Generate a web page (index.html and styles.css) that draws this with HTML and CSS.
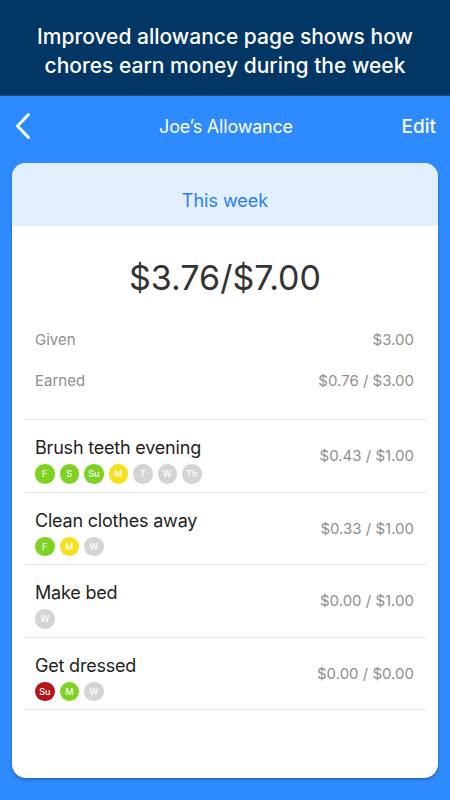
FILE: index.html
```html
<!DOCTYPE html>
<html lang="en">
<head>
    <meta charset="UTF-8">
    <meta name="viewport" content="width=device-width, initial-scale=1.0">
    <title>Joe's Allowance</title>
    <link rel="stylesheet" href="styles.css">
</head>
<body>
    <div class="promo">
        <p>Improved allowance page shows how<br>chores earn money during the week</p>
    </div>

    <div class="nav">
        <svg class="back" width="16" height="28" viewBox="0 0 16 28">
            <path d="M13.5 2.5 L2.5 14 L13.5 25.5" fill="none" stroke="#ffffff" stroke-width="3" stroke-linecap="round" stroke-linejoin="round"/>
        </svg>
        <div class="nav-title">Joe’s Allowance</div>
        <div class="nav-edit">Edit</div>
    </div>

    <div class="card">
        <div class="card-head">This week</div>

        <div class="total">$3.76/$7.00</div>

        <div class="summary">
            <div class="summary-row">
                <span>Given</span>
                <span>$3.00</span>
            </div>
            <div class="summary-row">
                <span>Earned</span>
                <span>$0.76 / $3.00</span>
            </div>
        </div>

        <div class="chores">
            <div class="chore">
                <div class="chore-info">
                    <div class="chore-name">Brush teeth evening</div>
                    <div class="days">
                        <span class="day done">F</span>
                        <span class="day done">S</span>
                        <span class="day done">Su</span>
                        <span class="day part">M</span>
                        <span class="day">T</span>
                        <span class="day">W</span>
                        <span class="day">Th</span>
                    </div>
                </div>
                <div class="chore-value">$0.43 / $1.00</div>
            </div>
            <div class="chore">
                <div class="chore-info">
                    <div class="chore-name">Clean clothes away</div>
                    <div class="days">
                        <span class="day done">F</span>
                        <span class="day part">M</span>
                        <span class="day">W</span>
                    </div>
                </div>
                <div class="chore-value">$0.33 / $1.00</div>
            </div>
            <div class="chore">
                <div class="chore-info">
                    <div class="chore-name">Make bed</div>
                    <div class="days">
                        <span class="day">W</span>
                    </div>
                </div>
                <div class="chore-value">$0.00 / $1.00</div>
            </div>
            <div class="chore">
                <div class="chore-info">
                    <div class="chore-name">Get dressed</div>
                    <div class="days">
                        <span class="day missed">Su</span>
                        <span class="day done">M</span>
                        <span class="day">W</span>
                    </div>
                </div>
                <div class="chore-value">$0.00 / $0.00</div>
            </div>
        </div>
    </div>
</body>
</html>
```

FILE: styles.css
```css
body {
    margin: 0;
    font-family: Inter, "Noto Sans", sans-serif;
    background-color: #2d8bff;
    height: 800px;
    overflow: hidden;
}

.promo {
    height: 96px;
    padding-top: 6px;
    background-color: #023665;
    display: flex;
    align-items: center;
    justify-content: center;
    border-bottom: 1px solid #1c4f86;
    box-sizing: border-box;
}

.promo p {
    margin: 0;
    color: #ffffff;
    font-size: 21px;
    font-weight: 500;
    line-height: 29px;
    text-align: center;
}

.nav {
    height: 60px;
    padding: 0 14px 0 16px;
    display: grid;
    grid-template-columns: 1fr auto 1fr;
    align-items: center;
    color: #ffffff;
}

.back {
    display: block;
    margin-left: -1px;
}

.nav-title {
    font-size: 18px;
    letter-spacing: -0.2px;
}

.nav-edit {
    justify-self: end;
    font-size: 19px;
    font-weight: 500;
}

.card {
    margin: 7px 12px 0;
    height: 615px;
    background-color: #ffffff;
    border-radius: 14px;
    overflow: hidden;
    box-shadow: 0 2px 3px rgba(0, 0, 0, 0.25);
}

.card-head {
    height: 63px;
    padding-top: 11px;
    box-sizing: border-box;
    background-color: #e1efff;
    color: #2b7cee;
    font-size: 18px;
    display: flex;
    align-items: center;
    justify-content: center;
}

.total {
    margin-top: 32px;
    font-size: 34px;
    line-height: 40px;
    color: #333333;
    text-align: center;
}

.summary {
    margin: 21px 24px 0 23px;
}

.summary-row {
    height: 41px;
    display: flex;
    align-items: center;
    justify-content: space-between;
    font-size: 15px;
    color: #8e8e8e;
}

.chores {
    margin: 18px 12px 0;
    border-top: 1px solid #e4e4e4;
}

.chore {
    display: flex;
    align-items: center;
    justify-content: space-between;
    padding: 16px 12px 8px 11px;
    border-bottom: 1px solid #e4e4e4;
}

.chore-name {
    font-size: 18px;
    line-height: 24px;
    letter-spacing: -0.2px;
    color: #1e1e1e;
}

.days {
    display: flex;
    gap: 5px;
    margin-top: 4px;
}

.day {
    width: 19.5px;
    height: 19.5px;
    border-radius: 50%;
    background-color: #d4d4d4;
    color: #ffffff;
    font-size: 9px;
    font-weight: 500;
    display: flex;
    align-items: center;
    justify-content: center;
}

.day.done {
    background-color: #7ed321;
}

.day.part {
    background-color: #f5e01a;
}

.day.missed {
    background-color: #b3151b;
}

.chore-value {
    margin-bottom: 8px;
    font-size: 15px;
    color: #8e8e8e;
}
```
